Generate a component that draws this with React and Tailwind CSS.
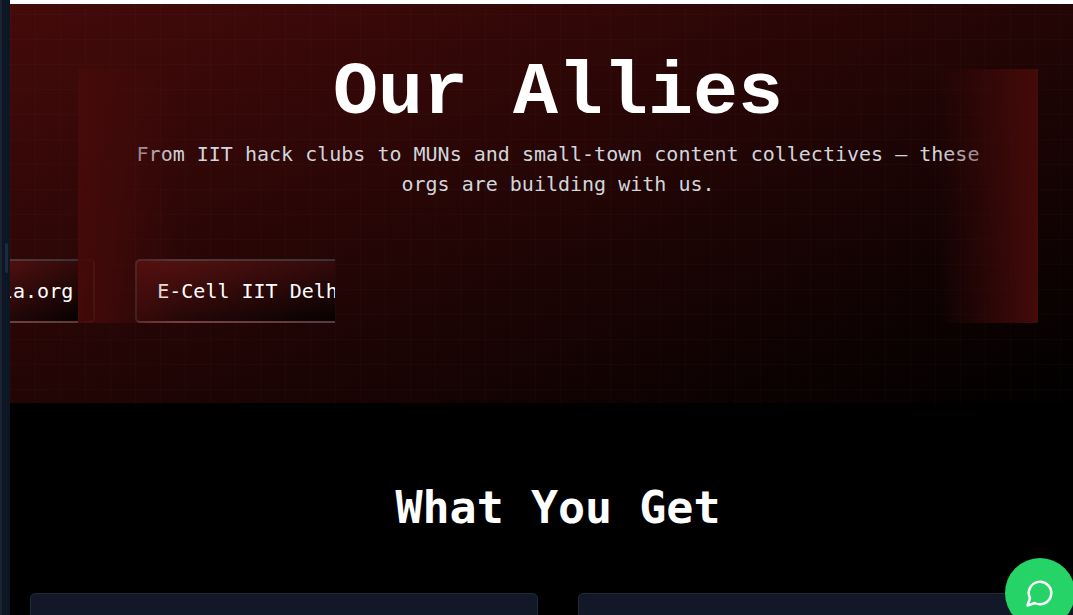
const allies = ['la.org', 'E-Cell IIT Delhi'];

function SidePanel() {
  return (
    <aside className="flex w-[10px] shrink-0 items-start border-l-2 border-[#1b2231] bg-[#0d1624] pt-[243px]">
      <div className="ml-[3px] h-[30px] w-[3px] rounded-full bg-[#1f2a3d]" />
    </aside>
  );
}

function Allies() {
  return (
    <section className="relative overflow-hidden bg-linear-to-br/srgb from-[#450a0a] to-black pt-[65px] pb-20">
      <div className="pointer-events-none absolute inset-0 bg-[linear-gradient(to_right,rgba(255,255,255,0.015)_1px,transparent_1px),linear-gradient(to_bottom,rgba(255,255,255,0.015)_1px,transparent_1px)] bg-[size:25px_25px] bg-[position:0px_10px]" />
      <div className="relative">
        <h1 className="mb-5 text-center font-['Liberation_Mono',monospace] text-[75px] leading-[50px] font-bold text-white">
          Our Allies
        </h1>
        <p className="mx-auto mb-[60px] max-w-[860px] text-center text-[20px] leading-[30px] text-gray-300">
          From IIT hack clubs to MUNs and small-town content collectives — these orgs are building with us.
        </p>
        <div className="w-[325px] overflow-hidden">
          <ul className="-ml-[31px] flex w-max gap-10">
            {allies.map((name) => (
              <li
                key={name}
                className="rounded-[5px] border-2 border-white/20 bg-linear-to-br/srgb from-[#5a1212] to-black px-5 py-[15px] text-[20px] leading-[30px] font-medium text-white"
              >
                {name}
              </li>
            ))}
          </ul>
        </div>
        <div className="pointer-events-none absolute inset-0 mx-auto flex max-w-[960px] justify-between">
          <div className="w-[100px] bg-linear-to-r/srgb from-[#450a0a] to-transparent" />
          <div className="w-[100px] bg-linear-to-l/srgb from-[#450a0a] to-transparent" />
        </div>
      </div>
    </section>
  );
}

function Benefits() {
  return (
    <section className="px-5 pt-20">
      <h2 className="mb-[60px] text-center text-[45px] leading-[50px] font-bold text-white">What You Get</h2>
      <div className="grid grid-cols-2 gap-10">
        <article className="h-60 rounded-[5px] border border-[#1f2937] bg-[#121827]" />
        <article className="h-60 rounded-[5px] border border-[#1f2937] bg-[#121827]" />
      </div>
    </section>
  );
}

export default function App() {
  return (
    <div className="flex h-screen overflow-hidden bg-black font-['DejaVu_Sans_Mono',monospace]">
      <SidePanel />
      <main className="-mr-[33px] min-w-0 flex-1 border-t-4 border-white">
        <Allies />
        <Benefits />
      </main>
      <button
        type="button"
        aria-label="Chat"
        className="fixed -right-[2px] -bottom-[13px] flex size-[70px] items-center justify-center rounded-full bg-[#25d366] text-white"
      >
        <svg viewBox="0 0 24 24" className="size-[30px]" fill="none" stroke="currentColor" strokeWidth="2" strokeLinecap="round" strokeLinejoin="round">
          <path d="M7.9 20A9 9 0 1 0 4 16.1L2 22Z" />
        </svg>
      </button>
    </div>
  );
}
